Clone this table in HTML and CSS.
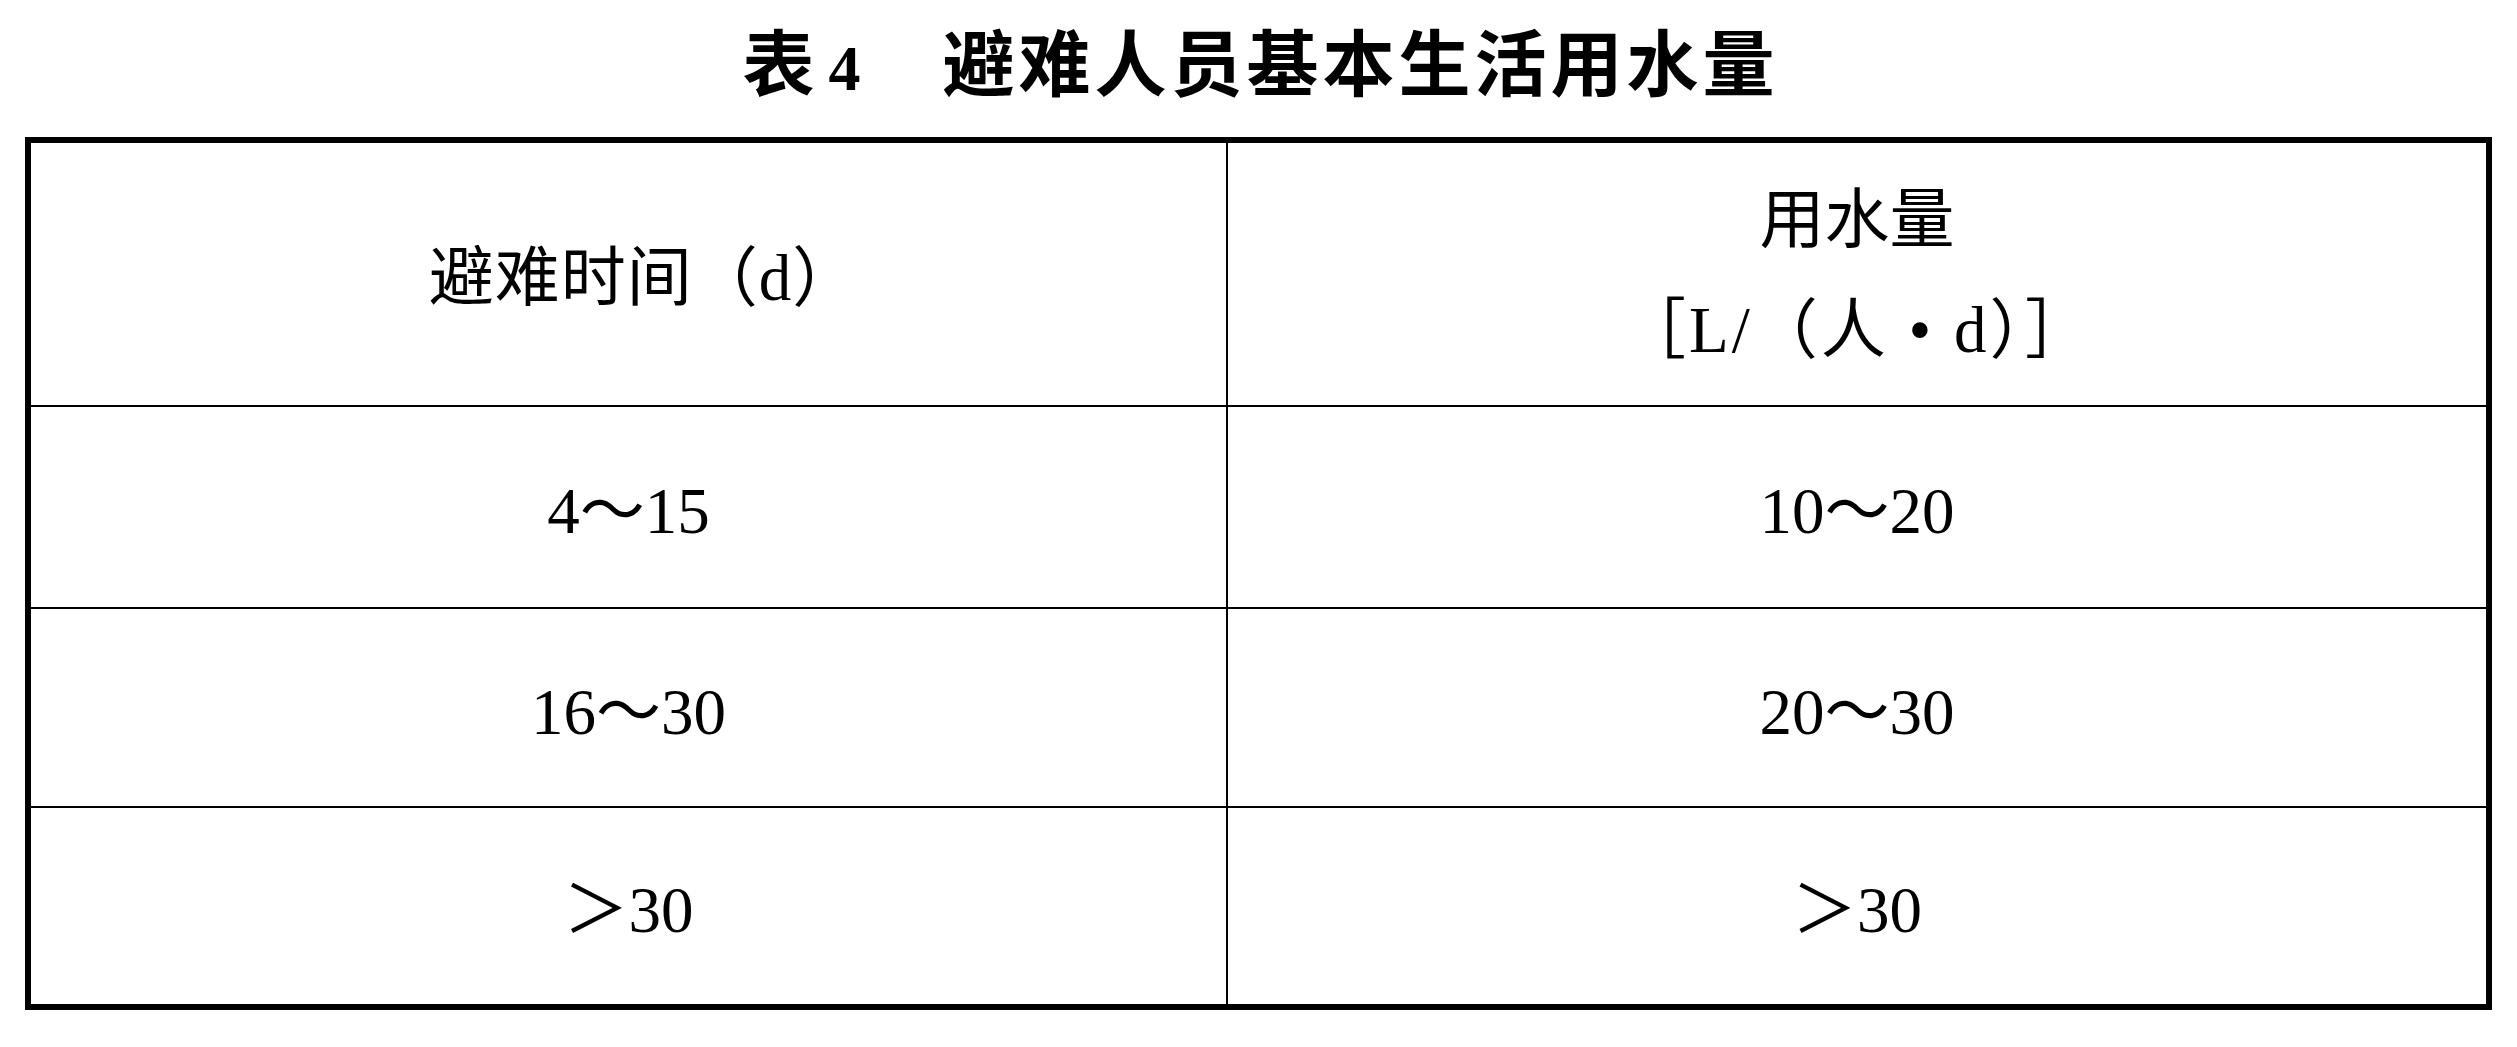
FILE: index.html
```html
<!DOCTYPE html>
<html lang="zh-CN">
<head>
<meta charset="utf-8">
<title>表4 避难人员基本生活用水量</title>
<link rel="stylesheet" href="styles.css">
</head>
<body>
<main class="page">
  <h1 class="title">
    <span class="title-label">表</span><span class="title-num">4</span><span class="title-name">避难人员基本生活用水量</span>
  </h1>
  <div class="table">
    <div class="cell col-left row-head head-left">避难时间（d）</div>
    <div class="cell col-right row-head stack">
      <span>用水量</span>
      <span class="unit">［L/（人<span class="dot">•</span>d）］</span>
    </div>

    <div class="cell col-left">4～15</div>
    <div class="cell col-right">10～20</div>

    <div class="cell col-left">16～30</div>
    <div class="cell col-right">20～30</div>

    <div class="cell col-left row-last">＞30</div>
    <div class="cell col-right row-last">＞30</div>
  </div>
</main>
</body>
</html>
```

FILE: styles.css
```css
* {
  box-sizing: border-box;
  margin: 0;
  padding: 0;
}

html, body {
  background: #fff;
}

body {
  width: 2517px;
  height: 1047px;
  overflow: hidden;
  color: #000;
  font-family: "Liberation Serif", "Noto Sans CJK SC", serif;
}

.page {
  width: 2492px;
  padding-left: 25px;
}

.title {
  height: 137px;
  padding-top: 23px;
  display: flex;
  justify-content: center;
  align-items: baseline;
  font-family: "Noto Sans CJK SC", sans-serif;
  font-weight: 700;
  font-size: 72px;
  line-height: 72px;
}

.title-num {
  font-family: "Liberation Serif", serif;
  font-size: 64px;
  margin-left: 14px;
  margin-right: 82px;
}

.title-name {
  letter-spacing: 4px;
  margin-right: -4px;
}

.table {
  width: 2467px;
  display: grid;
  grid-template-columns: 1197px 1258px;
  grid-template-rows: 264px 202px 199px 196px;
  border: 6px solid #000;
}

.cell {
  display: flex;
  flex-direction: column;
  align-items: center;
  justify-content: center;
  padding-top: 8px;
  font-size: 65px;
  line-height: 1.2;
  border-bottom: 2px solid #000;
  white-space: nowrap;
}

.col-left {
  border-right: 2px solid #000;
}

.row-last {
  border-bottom: none;
}

.head-left {
  padding-left: 30px;
  letter-spacing: 1px;
}

.stack {
  line-height: 110px;
  padding-top: 2px;
}

.unit {
  letter-spacing: 3px;
}

.dot {
  display: inline-block;
  width: 1em;
  text-align: center;
}
```
